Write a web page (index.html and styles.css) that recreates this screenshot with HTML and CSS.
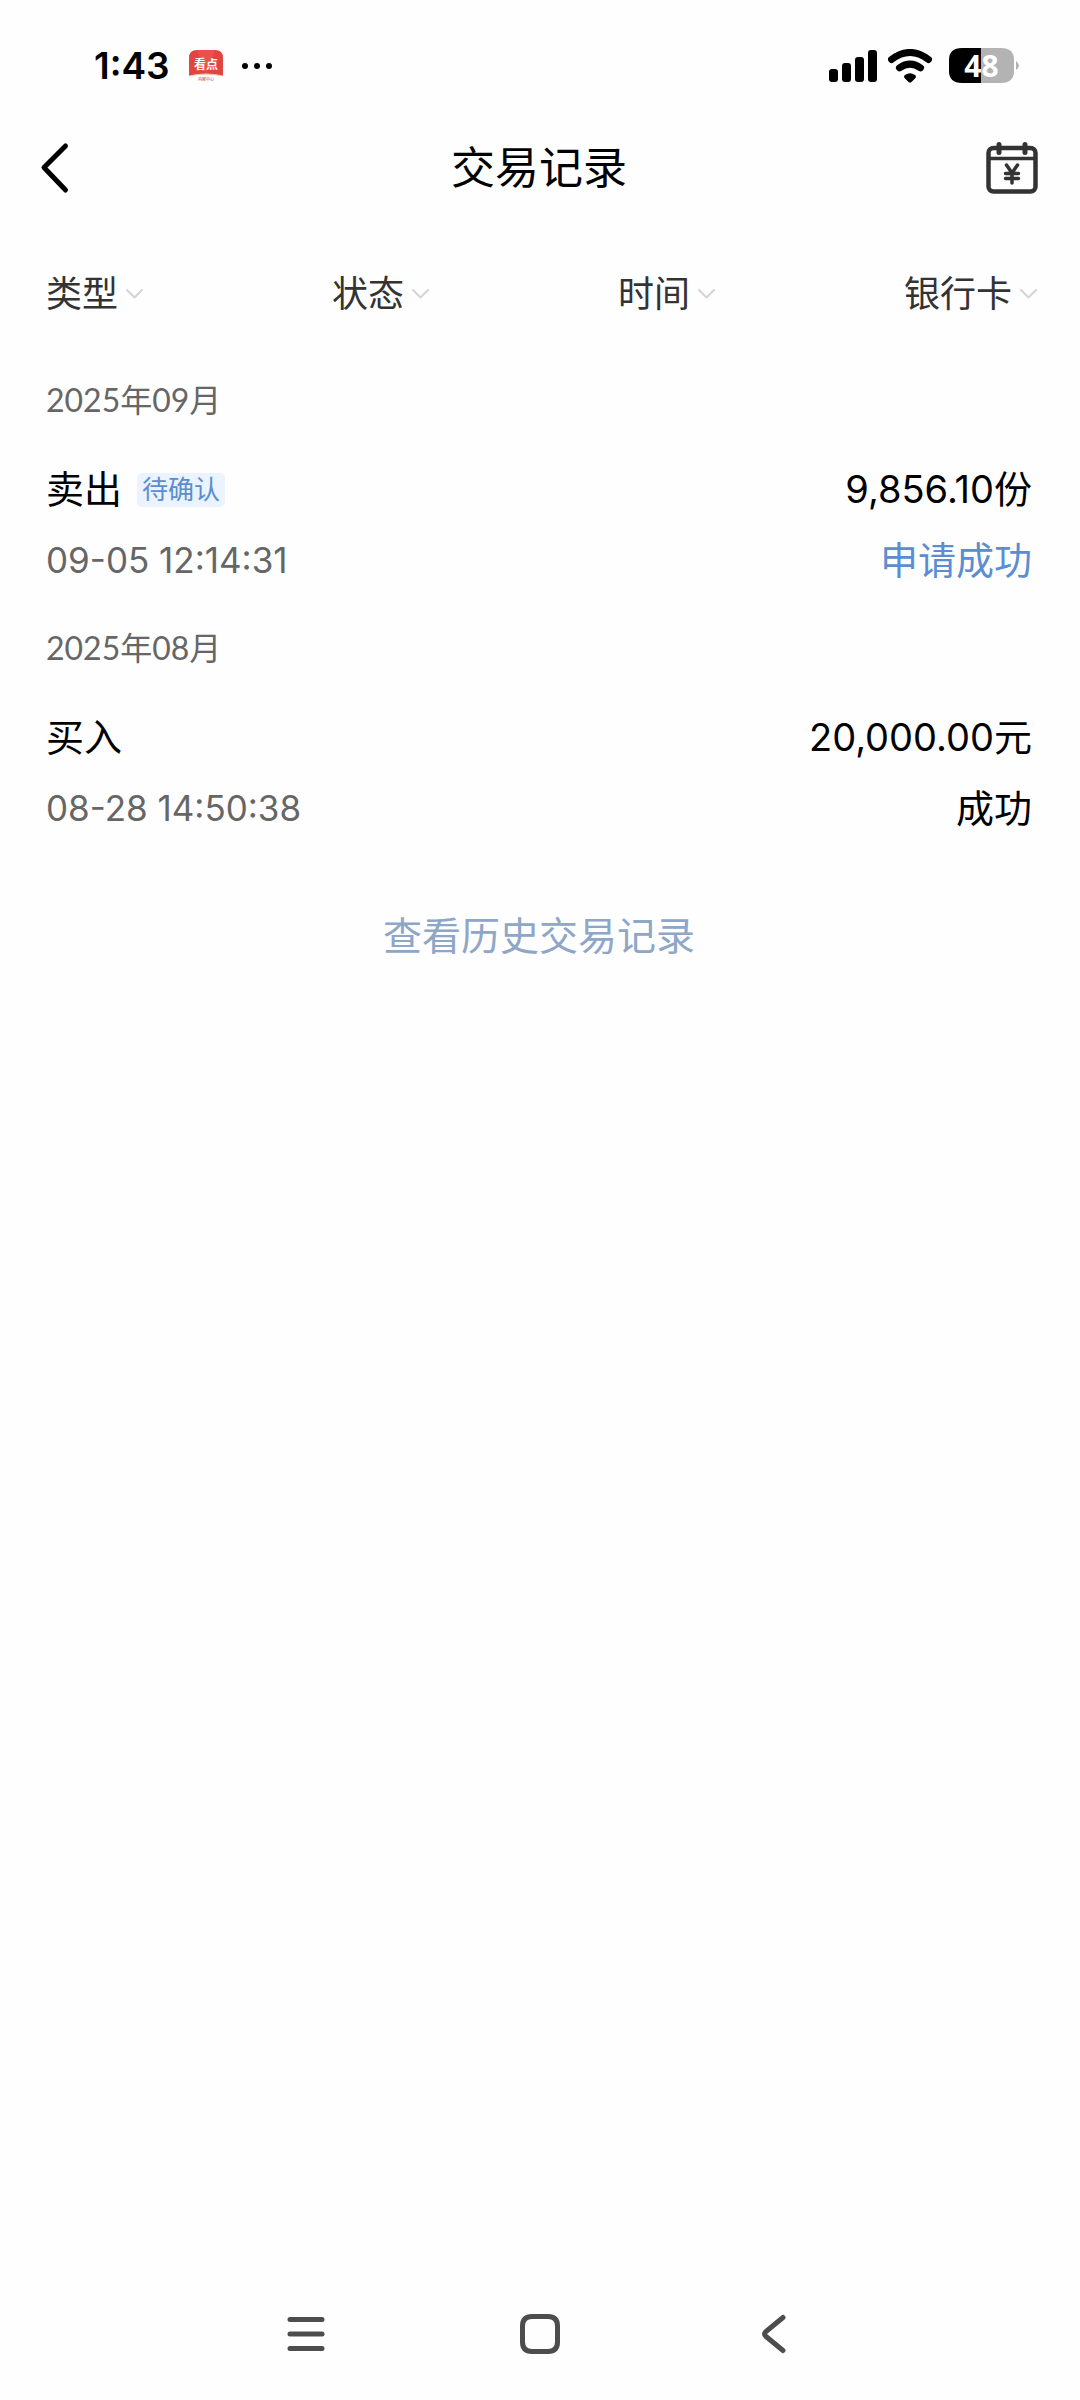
FILE: index.html
```html
<!DOCTYPE html>
<html lang="zh-CN">
<head>
<meta charset="utf-8">
<meta name="viewport" content="width=device-width, initial-scale=1">
<title>交易记录</title>
<link rel="stylesheet" href="styles.css">
</head>
<body>
<div class="status-bar">
  <div class="status-left">
    <span class="clock">1:43</span>
    <svg class="app-badge" width="34" height="32" viewBox="0 0 34 32" role="img" aria-label="看点">
      <path d="M0 26V8Q0 0 8 0H26Q34 0 34 8V26Q17 22 0 26Z" fill="#e2453f"/>
      <path d="M8 0Q12 12 17 24Q22 12 26 0Z" fill="#ea5148"/>
      <path d="M0 26Q17 22 34 26" fill="none" stroke="#f6c9a4" stroke-width="1"/>
      <text class="badge-name" x="17" y="19" text-anchor="middle">看点</text>
      <text class="badge-note" x="17" y="31" text-anchor="middle">内容中心</text>
    </svg>
    <svg width="30" height="8" viewBox="0 0 30 8" aria-hidden="true">
      <circle cx="3" cy="4" r="3"/><circle cx="15" cy="4" r="3"/><circle cx="27" cy="4" r="3"/>
    </svg>
  </div>
  <div class="status-right">
    <svg width="49" height="34" viewBox="0 0 49 34" aria-hidden="true">
      <rect x="0" y="20" width="9" height="13" rx="3"/>
      <rect x="13" y="14" width="9" height="19" rx="3"/>
      <rect x="26" y="8" width="9" height="25" rx="3"/>
      <rect x="39" y="1" width="9" height="32" rx="3"/>
    </svg>
    <svg class="wifi" width="44" height="34" viewBox="0 0 44 34" aria-hidden="true">
      <path d="M3.5 10.5Q22 -3.500 40.500 10.500" fill="none" stroke="#000" stroke-width="7" stroke-linecap="round"/>
      <path d="M11.500 18.800Q22 11.500 32.500 18.800" fill="none" stroke="#000" stroke-width="7" stroke-linecap="round"/>
      <path d="M17 26Q22 22.500 27 26Q29 27.500 27 29.500L23.500 33Q22 34 20.500 33L17 29.500Q15 27.500 17 26Z"/>
    </svg>
    <div class="battery">
      <svg class="battery-shape" width="71" height="36" viewBox="0 0 71 36" aria-hidden="true">
        <path d="M32 0H52Q65 0 65 12V23Q65 35 52 35H32Z" fill="#b3b3b3"/>
        <path d="M32 0H13Q0 0 0 12V23Q0 35 13 35H32Z"/>
        <path d="M67 13Q73 17.500 67 22Z" fill="#b3b3b3"/>
      </svg>
      <span class="battery-level">48</span>
    </div>
  </div>
</div>

<header class="title-bar">
  <button class="icon-button" type="button" aria-label="返回">
    <svg width="30" height="52" viewBox="0 0 30 52"><path d="M25.500 4L4 25.500L25.500 48" fill="none" stroke="#000" stroke-width="5" stroke-linecap="round" stroke-linejoin="round"/></svg>
  </button>
  <h1 class="title">交易记录</h1>
  <button class="icon-button icon-end" type="button" aria-label="账单日历">
    <svg width="52" height="52" viewBox="0 0 52 52" fill="none" stroke="#333" stroke-linecap="round" stroke-linejoin="round">
      <rect x="2.500" y="6" width="47" height="43.500" rx="5" stroke-width="4.500"/>
      <path d="M3 16.500H49" stroke-width="3.500"/>
      <path d="M13 2.500V10.500M39 2.500V10.500" stroke-width="5"/>
      <path d="M20.500 23L26 31L31.500 23M26 31V41M19.500 31.500H32.500M19.500 36.500H32.500" stroke-width="3.500"/>
    </svg>
  </button>
</header>

<form class="filters">
  <div class="filter">
    <select class="filter-select" aria-label="类型"><option>类型</option></select>
    <svg class="chevron" width="19" height="12" viewBox="0 0 19 12"><path d="M2 2L9.500 9.500L17 2"/></svg>
  </div>
  <div class="filter">
    <select class="filter-select" aria-label="状态"><option>状态</option></select>
    <svg class="chevron" width="19" height="12" viewBox="0 0 19 12"><path d="M2 2L9.500 9.500L17 2"/></svg>
  </div>
  <div class="filter">
    <select class="filter-select" aria-label="时间"><option>时间</option></select>
    <svg class="chevron" width="19" height="12" viewBox="0 0 19 12"><path d="M2 2L9.500 9.500L17 2"/></svg>
  </div>
  <div class="filter">
    <select class="filter-select" aria-label="银行卡"><option>银行卡</option></select>
    <svg class="chevron" width="19" height="12" viewBox="0 0 19 12"><path d="M2 2L9.500 9.500L17 2"/></svg>
  </div>
</form>

<main class="records">
  <section class="month">
    <h2 class="month-name">2025年09月</h2>
    <div class="record">
      <div class="line"><span class="kind">卖出<span class="tag">待确认</span></span><span>9,856.10份</span></div>
      <div class="line"><time class="when" datetime="2025-09-05T12:14:31">09-05 12:14:31</time><span class="pending">申请成功</span></div>
    </div>
  </section>
  <section class="month">
    <h2 class="month-name">2025年08月</h2>
    <div class="record">
      <div class="line"><span class="kind">买入</span><span>20,000.00元</span></div>
      <div class="line"><time class="when" datetime="2025-08-28T14:50:38">08-28 14:50:38</time><span>成功</span></div>
    </div>
  </section>
  <a class="history" href="#history">查看历史交易记录</a>
</main>

<nav class="system-nav">
  <button class="nav-button" type="button" aria-label="最近任务">
    <svg width="40" height="40" viewBox="0 0 40 40"><path d="M4 5.500H36M4 20H36M4 34.500H36"/></svg>
  </button>
  <button class="nav-button" type="button" aria-label="主屏幕">
    <svg width="40" height="40" viewBox="0 0 40 40"><path d="M12 2.500H28Q37.500 2.500 37.500 12V28Q37.500 37.500 28 37.500H12Q2.500 37.500 2.500 28V12Q2.500 2.500 12 2.500Z"/></svg>
  </button>
  <button class="nav-button" type="button" aria-label="返回上一级">
    <svg width="40" height="40" viewBox="0 0 40 40"><path d="M29 3.500L12 17.500Q9 20 12 22.500L29 36.500"/></svg>
  </button>
</nav>
</body>
</html>
```

FILE: styles.css
```css
* {
  box-sizing: border-box;
}

body {
  margin: 0;
  min-height: 100vh;
  display: flex;
  flex-direction: column;
  background: #fefefe;
  color: #000;
  font-family: Inter, "Noto Sans CJK SC", sans-serif;
  font-size: 38px;
}

svg {
  display: block;
}

button {
  padding: 0;
  border: 0;
  background: none;
  cursor: pointer;
}

.status-bar {
  display: flex;
  align-items: center;
  justify-content: space-between;
  height: 112px;
  padding: 20px 60px 0 94px;
}

.status-left,
.status-right {
  display: flex;
  align-items: center;
}

.status-left {
  gap: 19px;
}

.status-right {
  gap: 10px;
}

.clock {
  font-size: 37px;
  font-weight: 600;
  line-height: 48px;
}

.badge-name {
  fill: #fff;
  font-size: 12px;
  font-weight: 700;
}

.badge-note {
  fill: #a44;
  font-size: 4px;
}

.battery {
  display: grid;
  margin-left: 7px;
}

.battery-shape,
.battery-level {
  grid-area: 1 / 1;
}

.battery-level {
  padding-right: 6px;
  color: #fff;
  font-family: "Noto Sans", sans-serif;
  font-size: 30px;
  font-weight: 700;
  line-height: 36px;
  text-align: center;
}

.title-bar {
  display: grid;
  grid-template-columns: 1fr auto 1fr;
  align-items: center;
  height: 112px;
  padding: 0 42px 0 40px;
}

.title {
  margin: 0;
  font-size: 44px;
  font-weight: 400;
  line-height: 64px;
}

.icon-button {
  justify-self: start;
}

.icon-end {
  justify-self: end;
}

.filters {
  display: flex;
  align-items: center;
  justify-content: space-between;
  height: 140px;
  padding: 0 42px 0 46px;
}

.filter {
  display: grid;
  align-items: center;
}

.filter-select {
  grid-area: 1 / 1;
  appearance: none;
  margin: 0;
  padding: 0 25px 0 0;
  border: 0;
  background: none;
  color: #333;
  font-family: inherit;
  font-size: 36px;
  line-height: 52px;
}

.chevron {
  grid-area: 1 / 1;
  justify-self: end;
  pointer-events: none;
  fill: none;
  stroke: #d4d4d4;
  stroke-width: 2;
  stroke-linecap: round;
  stroke-linejoin: round;
}

.records {
  display: flex;
  flex-direction: column;
  padding: 0 48px 60px 46px;
}

.month {
  padding-bottom: 16px;
}

.month-name {
  margin: 0 0 18px;
  color: #666;
  font-family: Lato, "Noto Sans CJK SC", sans-serif;
  font-size: 32px;
  font-weight: 400;
  line-height: 72px;
}

.line {
  display: flex;
  align-items: center;
  justify-content: space-between;
  line-height: 71px;
}

.kind {
  display: flex;
  align-items: center;
  gap: 15px;
}

.tag {
  padding: 0 5px;
  border-radius: 5px;
  background: #ebf3fe;
  color: #5a8dd2;
  font-size: 26px;
  line-height: 34px;
}

.when {
  color: #666;
  font-size: 35px;
}

.pending {
  color: #5a8dd2;
}

.history {
  align-self: center;
  margin-top: 46px;
  color: #8ea6c8;
  font-size: 39px;
  line-height: 60px;
  text-decoration: none;
}

.system-nav {
  display: flex;
  align-items: center;
  justify-content: center;
  gap: 138px;
  height: 132px;
  margin-top: auto;
}

.nav-button {
  display: flex;
  align-items: center;
  justify-content: center;
  width: 96px;
  height: 96px;
}

.nav-button path {
  fill: none;
  stroke: #4d4d4d;
  stroke-width: 5;
  stroke-linecap: round;
  stroke-linejoin: round;
}
```
